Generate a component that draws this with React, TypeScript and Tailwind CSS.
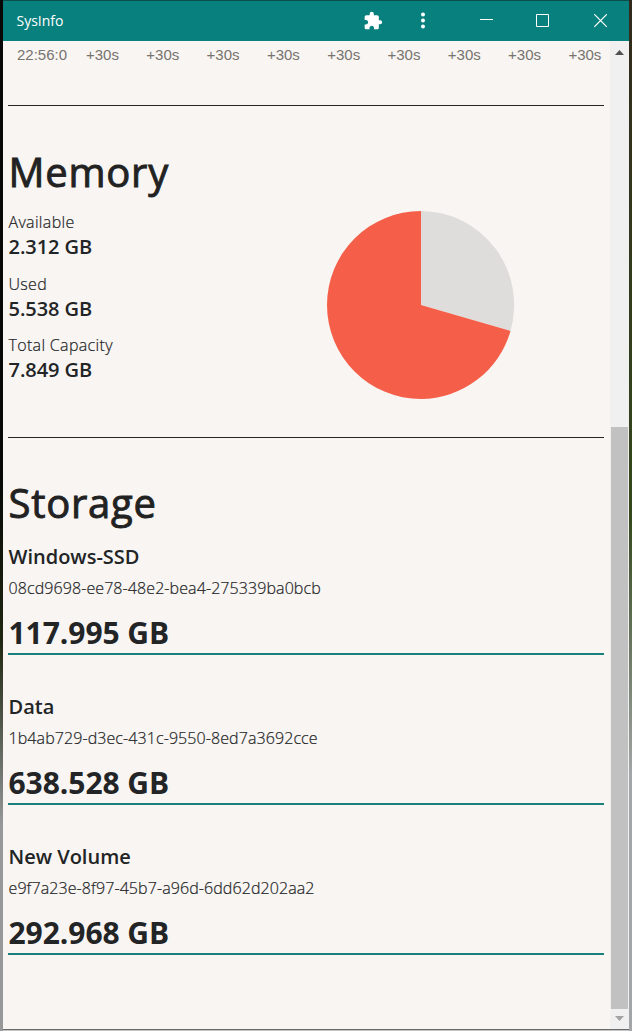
import React from "react";

const ticks = ["+30s", "+30s", "+30s", "+30s", "+30s", "+30s", "+30s", "+30s", "+30s"];

const memory = [
  { label: "Available", value: "2.312 GB" },
  { label: "Used", value: "5.538 GB" },
  { label: "Total Capacity", value: "7.849 GB" },
];

const drives = [
  { name: "Windows-SSD", id: "08cd9698-ee78-48e2-bea4-275339ba0bcb", size: "117.995 GB" },
  { name: "Data", id: "1b4ab729-d3ec-431c-9550-8ed7a3692cce", size: "638.528 GB" },
  { name: "New Volume", id: "e9f7a23e-8f97-45b7-a96d-6dd62d202aa2", size: "292.968 GB" },
];

function TitleBar() {
  return (
    <header className="flex h-10 shrink-0 items-center bg-[#08807e] pl-[13.5px] text-white">
      <h1 className="flex-1 font-['Open_Sans',sans-serif] text-[14px] leading-5">SysInfo</h1>
      <svg className="mr-[30px] size-5" viewBox="0 0 24 24" fill="currentColor">
        <path d="M20.5 11H19V7c0-1.1-.9-2-2-2h-4V3.5a2.5 2.5 0 0 0-5 0V5H4c-1.1 0-1.99.9-1.99 2v3.8H3.5c1.49 0 2.7 1.21 2.7 2.7s-1.21 2.7-2.7 2.7H2V20c0 1.1.9 2 2 2h3.8v-1.500c0-1.49 1.21-2.7 2.7-2.7s2.7 1.21 2.7 2.7V22H17c1.1 0 2-.9 2-2v-4h1.500a2.500 2.500 0 0 0 0-5z" />
      </svg>
      <svg className="mr-[47px] h-[18px] w-[20px]" viewBox="0 0 20 18" fill="currentColor">
        <circle cx="10" cy="2.500" r="2" />
        <circle cx="10" cy="8.500" r="2" />
        <circle cx="10" cy="14.500" r="2" />
      </svg>
      <svg className="mr-[42px] h-[14px] w-[14px]" viewBox="0 0 14 14" stroke="currentColor">
        <path d="M0 5.500h13" />
      </svg>
      <svg className="mr-[44px] size-[14px]" viewBox="0 0 14 14" fill="none" stroke="currentColor">
        <path d="M.5.5h12v12H.5z" />
      </svg>
      <svg className="mr-[21px] size-[14px]" viewBox="0 0 14 14" fill="none" stroke="currentColor" strokeWidth="1.2">
        <path d="M.3.3l12.500 12.500M12.800 .3l-12.500 12.500" />
      </svg>
    </header>
  );
}

function Scrollbar() {
  return (
    <div className="flex w-[19px] shrink-0 flex-col items-center bg-[#f0f0f1]">
      <svg className="mt-[9px] h-[5px] w-[9px]" viewBox="0 0 9 5" fill="#505050">
        <path d="M0 5L4.500 0 9 5z" />
      </svg>
      <div className="mt-[372px] h-[582px] w-[17px] bg-[#c1c1c1]" />
      <svg className="mt-[7px] h-[5px] w-[9px]" viewBox="0 0 9 5" fill="#a3a3a3">
        <path d="M0 0L4.500 5 9 0z" />
      </svg>
    </div>
  );
}

function SectionTitle({ children }: { children: string }) {
  return (
    <h2 className="pl-[0.5px] text-[40px] leading-[48px] tracking-[0.75px] text-[#222222] [-webkit-text-stroke:0.9px_currentColor]">
      {children}
    </h2>
  );
}

function MemorySection() {
  return (
    <section className="mt-[42px] h-[289px]">
      <SectionTitle>Memory</SectionTitle>
      <div className="flex">
        <dl className="mt-[14px] w-[319px]">
          {memory.map((m) => (
            <div key={m.label} className="mb-[12.6px] pl-[0.5px]">
              <dt className="text-base font-light tracking-[0.33px] [-webkit-text-stroke:0.2px_currentColor]">{m.label}</dt>
              <dd className="mt-px text-xl leading-6 font-semibold tracking-[-0.05px]">{m.value}</dd>
            </div>
          ))}
        </dl>
        <svg className="mt-[14px] h-[190px] w-[188px]" viewBox="0 0 188 190">
          <path d="M94 95V1A93.500 94 0 0 1 183.500 121z" fill="#dfdddb" />
          <path d="M94 95V1A94 94 0 0 0 0 95A94 94 0 0 0 94 189A94 94 0 0 0 183.500 121z" fill="#f55f49" />
        </svg>
      </div>
    </section>
  );
}

function Drive({ name, id, size }: { name: string; id: string; size: string }) {
  return (
    <article className="mb-[39px] h-[111px] border-b-2 border-[#1b7f7b] pl-[0.5px]">
      <h3 className="pt-px text-xl leading-6 font-semibold">{name}</h3>
      <p className="mt-[7px] text-base font-light tracking-[0.09px] [-webkit-text-stroke:0.2px_currentColor]">{id}</p>
      <p className="mt-[16px] text-[30px] leading-[34px] font-bold tracking-[-0.05px]">{size}</p>
    </article>
  );
}

export default function App() {
  return (
    <div className="flex h-[1031px] w-[632px] bg-[#0b4f4c] font-['Open_Sans',sans-serif] text-[#222426]">
      <div className="w-[3px] shrink-0 bg-linear-to-b from-[#060706] from-45% via-[#1f2610] via-62% to-[#96989a] to-80%" />
      <div className="flex min-w-0 flex-1 flex-col pt-px">
        <TitleBar />
        <div className="flex min-h-0 flex-1 border-b border-[#6a6a6a]">
          <main className="min-w-0 flex-1 bg-[#f8f5f2] pr-[6px] pl-[5px]">
            <div className="flex h-16 pt-1 pl-[9px] font-['Liberation_Sans',sans-serif] text-[15px] leading-5 text-[#77736f]">
              <span className="w-[69px] shrink-0">22:56:0</span>
              {ticks.map((t, i) => (
                <span key={i} className="w-[60.3px] shrink-0">{t}</span>
              ))}
            </div>
            <hr className="border-[#292523]" />
            <MemorySection />
            <hr className="border-[#292523]" />
            <section className="pt-[41px]">
              <SectionTitle>Storage</SectionTitle>
              <div className="mt-[17px]">
                {drives.map((d) => (
                  <Drive key={d.id} {...d} />
                ))}
              </div>
            </section>
          </main>
          <Scrollbar />
        </div>
        <div className="h-px shrink-0 bg-[#c4c5c6]" />
      </div>
      <div className="w-[3px] shrink-0 bg-linear-to-b from-[#302a1c] via-[#34481c] via-50% to-[#a3a5a6] to-75%" />
    </div>
  );
}
